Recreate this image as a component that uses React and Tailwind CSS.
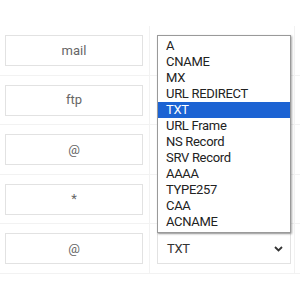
import React from 'react';

const hosts = ['mail', 'ftp', '@', '*', '@'];
const types = ['A', 'CNAME', 'MX', 'URL REDIRECT', 'TXT', 'URL Frame', 'NS Record', 'SRV Record', 'AAAA', 'TYPE257', 'CAA', 'ACNAME'];

export default function App() {
  return (
    <div className="relative w-[300px] h-[300px] bg-white overflow-hidden font-['Roboto',sans-serif]">
      <div className="pt-[26px]">
        {hosts.map((h, i) => (
          <div key={i} className="flex h-[49.5px] border-b border-[#f2f2f2]">
            <div className="w-[150px] border-r border-[#f2f2f2] pl-[5px] pr-[6px] pt-[9px]">
              <div className="h-[31px] border border-[#e2e2e2] flex items-center justify-center text-[13px] text-[#666]">
                {h}
              </div>
            </div>
            <div className="w-[145px] border-r border-[#f2f2f2] pl-[7px] pr-[3px] pt-[9px]">
              {i === 4 && (
                <div className="h-[31px] border border-[#e2e2e2] flex items-center justify-between pl-[9px] pr-[7px] text-[13px] tracking-[-0.3px] text-[#333]">
                  <span>TXT</span>
                  <svg width="9" height="6" viewBox="0 0 9 6">
                    <path d="M1 1l3.5 3.5L8 1" fill="none" stroke="#333" strokeWidth="1.8" />
                  </svg>
                </div>
              )}
            </div>
          </div>
        ))}
      </div>

      <ul className="absolute left-[157px] top-[35px] w-[134px] bg-white border border-[#9a9a9a] shadow-[1px_1px_2px_rgba(0,0,0,0.35)] py-[2px] text-[13px] tracking-[-0.3px] text-[#222]">
        {types.map((t) => (
          <li
            key={t}
            className={`h-[16px] leading-[16px] pl-[8px] ${t === 'TXT' ? 'bg-[#1c63d3] text-white' : ''}`}
          >
            {t}
          </li>
        ))}
      </ul>
    </div>
  );
}
